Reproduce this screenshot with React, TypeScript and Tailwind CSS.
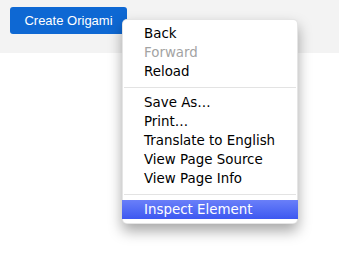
const groups: { label: string; disabled?: boolean }[][] = [
  [{ label: "Back" }, { label: "Forward", disabled: true }, { label: "Reload" }],
  [
    { label: "Save As…" },
    { label: "Print…" },
    { label: "Translate to English" },
    { label: "View Page Source" },
    { label: "View Page Info" },
  ],
];

export default function App() {
  return (
    <div className="relative h-[254px] w-[339px] overflow-hidden bg-white font-['Liberation_Sans',Arial,sans-serif]">
      <div className="h-[53px] bg-[#f3f3f3] pl-[10px] pt-[7px]">
        <button className="h-[27px] w-[117px] rounded-[3px] bg-[#0e68d3] text-[13px] text-white">
          Create Origami
        </button>
      </div>

      <div className="absolute left-[122px] top-[19px] w-[176px] rounded-[5px] border border-black/10 bg-white pt-[4px] pb-[4px] font-['DejaVu_Sans',sans-serif] text-[13.4px] leading-[19px] text-black shadow-[0_7px_14px_rgba(0,0,0,0.35)]">
        {groups.map((g, i) => (
          <div key={i}>
            {g.map((item) => (
              <div
                key={item.label}
                className={`pl-[21px] ${item.disabled ? "text-[#a3a3a3]" : ""}`}
              >
                {item.label}
              </div>
            ))}
            <div className="mx-[1px] mt-[6px] mb-[5px] h-px bg-[#e3e3e3]" />
          </div>
        ))}
        <div className="-mx-px bg-gradient-to-b from-[#6a7ff9] to-[#3d57f0] pl-[22px] text-white">
          Inspect Element
        </div>
      </div>
    </div>
  );
}
